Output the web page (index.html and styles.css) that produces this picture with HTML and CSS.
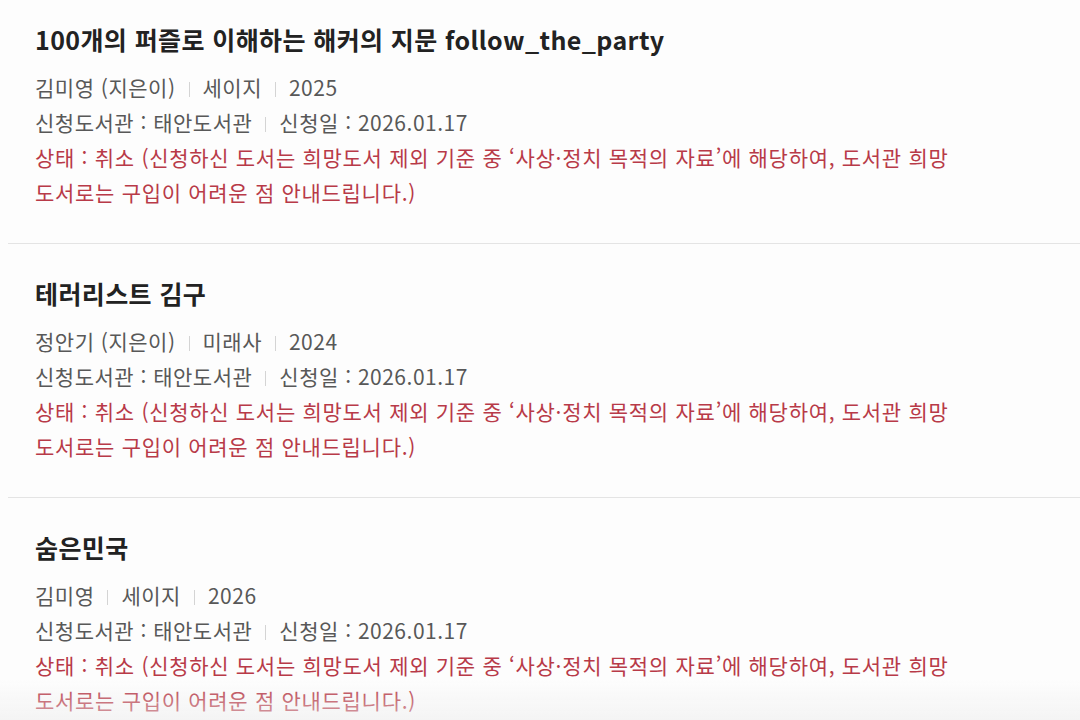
FILE: index.html
```html
<!DOCTYPE html>
<html lang="ko">
<head>
<meta charset="utf-8">
<link rel="stylesheet" href="styles.css">
</head>
<body>
<ul class="list">
  <li class="item">
    <h2 class="title">100개의 퍼즐로 이해하는 해커의 지문 follow_the_party</h2>
    <p class="meta">김미영 (지은이)<span class="sep"></span>세이지<span class="sep"></span>2025</p>
    <p class="meta">신청도서관 : 태안도서관<span class="sep"></span>신청일 : 2026.01.17</p>
    <p class="status">상태 : 취소 (신청하신 도서는 희망도서 제외 기준 중 ‘사상·정치 목적의 자료’에 해당하여, 도서관 희망<br>도서로는 구입이 어려운 점 안내드립니다.)</p>
  </li>
  <li class="item">
    <h2 class="title">테러리스트 김구</h2>
    <p class="meta">정안기 (지은이)<span class="sep"></span>미래사<span class="sep"></span>2024</p>
    <p class="meta">신청도서관 : 태안도서관<span class="sep"></span>신청일 : 2026.01.17</p>
    <p class="status">상태 : 취소 (신청하신 도서는 희망도서 제외 기준 중 ‘사상·정치 목적의 자료’에 해당하여, 도서관 희망<br>도서로는 구입이 어려운 점 안내드립니다.)</p>
  </li>
  <li class="item">
    <h2 class="title">숨은민국</h2>
    <p class="meta">김미영<span class="sep"></span>세이지<span class="sep"></span>2026</p>
    <p class="meta">신청도서관 : 태안도서관<span class="sep"></span>신청일 : 2026.01.17</p>
    <p class="status">상태 : 취소 (신청하신 도서는 희망도서 제외 기준 중 ‘사상·정치 목적의 자료’에 해당하여, 도서관 희망<br>도서로는 구입이 어려운 점 안내드립니다.)</p>
  </li>
</ul>
<div class="fade"></div>
</body>
</html>
```

FILE: styles.css
```css
html, body {
  margin: 0;
  padding: 0;
  background: #fdfdfd;
}
body {
  font-family: "Noto Sans CJK KR", "Noto Sans", sans-serif;
  width: 1080px;
  height: 720px;
  overflow: hidden;
}
.list {
  list-style: none;
  margin: 0;
  padding: 0 0 0 8px;
}
.item {
  padding: 32px 0 33px 27px;
  border-bottom: 1px solid #e4e4e4;
}
.item:first-child {
  padding-top: 22px;
}
.title {
  margin: 0 0 14px;
  font-size: 25px;
  line-height: 34px;
  font-weight: 700;
  color: #222;
  letter-spacing: 0.4px;
}
.meta, .status {
  margin: 0;
  font-size: 21px;
  line-height: 35px;
  color: #585858;
  letter-spacing: 0.5px;
}
.status {
  color: #b83a48;
  letter-spacing: 0.7px;
}
.sep {
  display: inline-block;
  width: 1px;
  height: 15px;
  background: #d4d4d4;
  margin: 0 13px;
  vertical-align: -1px;
}
.fade {
  position: fixed;
  left: 0;
  right: 0;
  bottom: 0;
  height: 40px;
  background: linear-gradient(to bottom, rgba(238,238,238,0), rgba(238,238,238,0.6));
  pointer-events: none;
}
```
